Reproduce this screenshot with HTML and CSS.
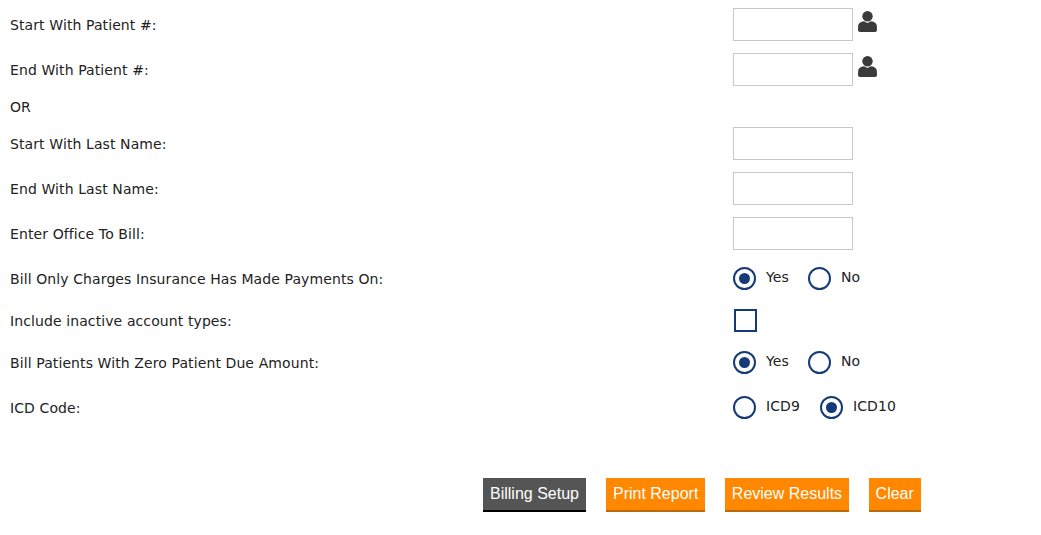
FILE: index.html
```html
<!DOCTYPE html>
<html lang="en">
<head>
<meta charset="utf-8">
<title>Billing</title>
<link rel="stylesheet" href="styles.css">
</head>
<body>
<form class="form">
  <div class="row row-input">
    <label class="label">Start With Patient #:</label>
    <div class="control"><input class="field" type="text">
      <svg class="person" viewBox="0 0 19 21" aria-hidden="true"><circle cx="9.5" cy="5.2" r="5.2"/><path d="M6 10.2 L9.5 12 L13 10.2 C16.5 10.8 18.6 12 18.8 14.5 L19 19 C19 20.3 18 21 17 21 L2 21 C1 21 0 20.3 0 19 L.2 14.5 C.4 12 2.5 10.8 6 10.2 Z"/></svg>
    </div>
  </div>
  <div class="row row-input">
    <label class="label">End With Patient #:</label>
    <div class="control"><input class="field" type="text">
      <svg class="person" viewBox="0 0 19 21" aria-hidden="true"><circle cx="9.5" cy="5.2" r="5.2"/><path d="M6 10.2 L9.5 12 L13 10.2 C16.5 10.8 18.6 12 18.8 14.5 L19 19 C19 20.3 18 21 17 21 L2 21 C1 21 0 20.3 0 19 L.2 14.5 C.4 12 2.5 10.8 6 10.2 Z"/></svg>
    </div>
  </div>
  <div class="or">OR</div>
  <div class="row row-input">
    <label class="label">Start With Last Name:</label>
    <div class="control"><input class="field" type="text"></div>
  </div>
  <div class="row row-input">
    <label class="label">End With Last Name:</label>
    <div class="control"><input class="field" type="text"></div>
  </div>
  <div class="row row-input">
    <label class="label">Enter Office To Bill:</label>
    <div class="control"><input class="field" type="text"></div>
  </div>
  <div class="row row-choice first-choice">
    <label class="label">Bill Only Charges Insurance Has Made Payments On:</label>
    <div class="control">
      <span class="radio on"></span><span class="opt opt-yes">Yes</span>
      <span class="radio"></span><span class="opt">No</span>
    </div>
  </div>
  <div class="row row-choice">
    <label class="label">Include inactive account types:</label>
    <div class="control"><span class="check"></span></div>
  </div>
  <div class="row row-choice">
    <label class="label">Bill Patients With Zero Patient Due Amount:</label>
    <div class="control">
      <span class="radio on"></span><span class="opt opt-yes">Yes</span>
      <span class="radio"></span><span class="opt">No</span>
    </div>
  </div>
  <div class="row row-choice icd">
    <label class="label">ICD Code:</label>
    <div class="control">
      <span class="radio"></span><span class="opt opt-icd">ICD9</span>
      <span class="radio on"></span><span class="opt">ICD10</span>
    </div>
  </div>
  <div class="actions">
    <button class="btn btn-dark" type="button">Billing Setup</button>
    <button class="btn" type="button">Print Report</button>
    <button class="btn btn-review" type="button">Review Results</button>
    <button class="btn" type="button">Clear</button>
  </div>
</form>
</body>
</html>
```
FILE: styles.css
```css
* { box-sizing: border-box; }
html, body { margin: 0; background: #fff; }
body { font-family: "DejaVu Sans", Verdana, sans-serif; font-size: 14px; letter-spacing: .1px; color: #222; }
.form { display: flex; flex-direction: column; padding: 8px 0 0 10px; }
.row { display: grid; grid-template-columns: 723px 1fr; align-items: center; }
.row-input { height: 33px; margin-bottom: 12px; }
.label { display: block; }
.control { display: flex; align-items: center; }
.field { width: 120px; height: 33px; border: 1px solid #c8c8c8; background: #fff; padding: 0 4px; margin: 0; }
.person { width: 19px; height: 21px; margin: -6px 0 0 5px; fill: #3a3a3a; }
.or { height: 18px; line-height: 18px; margin-bottom: 11px; }
.row-choice { height: 23px; margin-bottom: 19px; }
.first-choice { margin-top: 5px; }
.icd { margin-top: 3px; }
.radio { width: 23px; height: 23px; border: 2.5px solid #143a78; border-radius: 50%; background: #fff; flex: none; position: relative; }
.radio.on::after { content: ""; position: absolute; left: 3.5px; top: 3.5px; width: 11px; height: 11px; border-radius: 50%; background: #143a78; }
.check { display: block; width: 23px; height: 23px; margin-left: 1px; border: 2px solid #143a78; background: #fff; }
.opt { margin: -3px 0 0 10px; }
.opt-yes { width: 42px; }
.opt-icd { width: 54px; }
.actions { display: flex; gap: 20px; margin: 40px 0 0 473px; }
.btn { height: 34px; padding: 0 7px 1px; border: 0; border-bottom: 2px solid #b86a0c; border-radius: 0; background: #ff8800; color: #fff; font-family: "Liberation Sans", Arial, sans-serif; font-size: 16px; letter-spacing: 0; }
.btn-review { padding: 0 6.5px 1px; }
.btn-dark { background: #555; border-bottom-color: #000; }
```
